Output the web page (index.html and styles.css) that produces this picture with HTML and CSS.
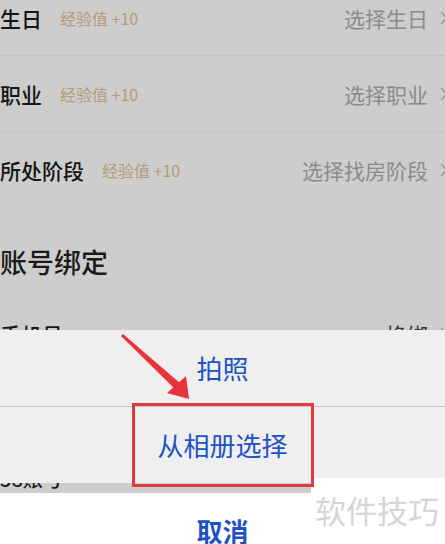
FILE: index.html
```html
<!DOCTYPE html>
<html lang="zh-CN">
<head>
  <meta charset="UTF-8">
  <meta name="viewport" content="width=device-width, initial-scale=1.0">
  <title>个人资料</title>
  <link rel="stylesheet" href="styles.css">
</head>
<body>
  <div class="page">
    <div class="row">
      <span class="label">生日</span>
      <span class="exp">经验值 +10</span>
      <span class="value">选择生日</span>
      <svg class="chev" viewBox="0 0 10 16"><path d="M2 2 L8 8 L2 14" /></svg>
    </div>
    <div class="row">
      <span class="label">职业</span>
      <span class="exp">经验值 +10</span>
      <span class="value">选择职业</span>
      <svg class="chev" viewBox="0 0 10 16"><path d="M2 2 L8 8 L2 14" /></svg>
    </div>
    <div class="row last">
      <span class="label">所处阶段</span>
      <span class="exp">经验值 +10</span>
      <span class="value">选择找房阶段</span>
      <svg class="chev" viewBox="0 0 10 16"><path d="M2 2 L8 8 L2 14" /></svg>
    </div>

    <h2 class="section">账号绑定</h2>

    <div class="row">
      <span class="label">手机号</span>
      <span class="value dark">换绑</span>
      <svg class="chev" viewBox="0 0 10 16"><path d="M2 2 L8 8 L2 14" /></svg>
    </div>
  </div>

  <div class="sheet">
    <div class="option">拍照</div>
    <div class="option">从相册选择</div>
    <div class="peek"><span>58账号</span></div>
    <div class="option cancel">取消</div>
  </div>

  <div class="watermark">软件技巧</div>

  <div class="highlight"></div>
  <svg class="arrow" viewBox="0 0 445 544">
    <polygon points="121,336 123,334 181,384 176,390" />
    <polygon points="167,393 186,376 189,399" />
  </svg>
</body>
</html>
```

FILE: styles.css
```css
html, body {
  margin: 0;
  padding: 0;
}
body {
  width: 445px;
  height: 544px;
  overflow: hidden;
  position: relative;
  font-family: "Noto Sans CJK SC", "Noto Sans", sans-serif;
  background: #cdcdcd;
}
.page {
  margin-top: -20px;
}
.row {
  display: flex;
  align-items: center;
  height: 75px;
  margin-right: -4px;
  border-bottom: 1px solid #c3c3c3;
}
.row.last {
  border-bottom: none;
  height: 76px;
}
.label {
  font-size: 21px;
  font-weight: 500;
  color: #151515;
}
.exp {
  margin-left: 18px;
  font-size: 16px;
  color: #b39d78;
}
.value {
  margin-left: auto;
  font-size: 21px;
  color: #8b8b8b;
}
.value.dark {
  color: #333;
}
.chev {
  width: 10px;
  height: 16px;
  margin-left: 11px;
  fill: none;
  stroke: #9a9a9a;
  stroke-width: 1.6;
}
.section {
  margin: 36px 0 16px;
  height: 36px;
  line-height: 36px;
  font-size: 27px;
  font-weight: 500;
  color: #1a1a1a;
}

.sheet {
  position: absolute;
  top: 330px;
  left: 0;
  right: 0;
  bottom: 0;
  background: #efefef;
}
.option {
  height: 76px;
  line-height: 76px;
  text-align: center;
  font-size: 26px;
  color: #2152c4;
}
.option:first-child {
  border-bottom: 1px solid #c9c9c9;
}
.peek {
  width: 311px;
  height: 10px;
  overflow: hidden;
  background: #cdcdcd;
}
.peek span {
  display: block;
  margin-top: -18px;
  line-height: 28px;
  font-size: 20px;
  font-weight: 500;
  color: #1a1a1a;
}
.option.cancel {
  background: #fff;
  font-weight: 700;
}

.watermark {
  position: absolute;
  left: 311px;
  top: 478px;
  right: 0;
  bottom: 0;
  padding: 12px 0 0 4px;
  background: #fff;
  font-size: 31px;
  line-height: 40px;
  color: #d5d5d5;
}
.highlight {
  position: absolute;
  left: 132px;
  top: 403px;
  width: 176px;
  height: 78px;
  border: 3px solid #de3a3f;
}
.arrow {
  position: absolute;
  left: 0;
  top: 0;
  width: 445px;
  height: 544px;
  fill: #e8333a;
  pointer-events: none;
}
```
